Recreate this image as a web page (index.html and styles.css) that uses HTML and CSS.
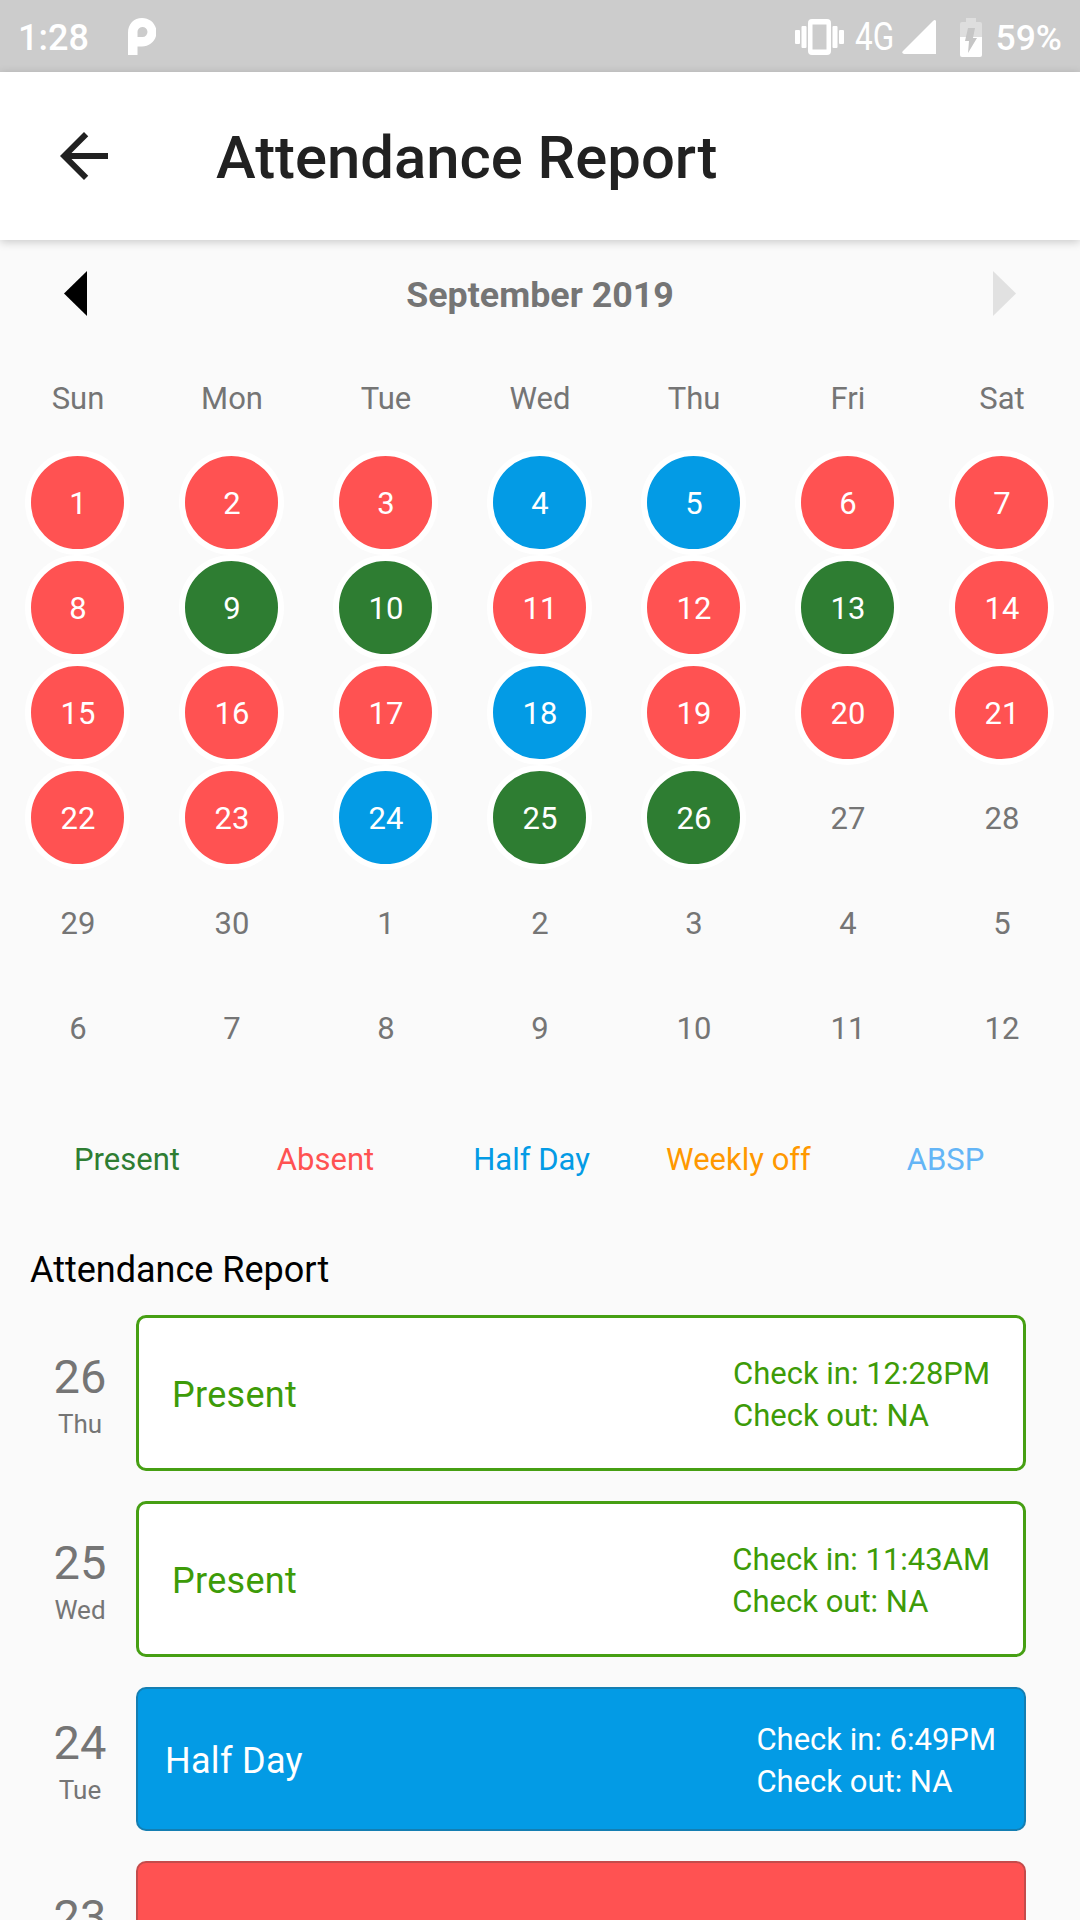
FILE: index.html
```html
<!DOCTYPE html>
<html lang="en">

<head>
  <meta charset="UTF-8">
  <meta name="viewport" content="width=device-width, initial-scale=1.0">
  <title>Attendance Report</title>
  <link rel="stylesheet" href="styles.css">
</head>

<body>
  <div class="status-bar">
    <span class="time">1:28</span>
    <svg class="logo" width="28" height="38" viewBox="0 0 28 38">
      <path fill="#fff" fill-rule="evenodd" d="M0 37V14.500C0 6 6 0 14 0s14.500 6 14.500 14.200S22 28.500 14 28.500H9.500V37zM9.500 19V14.500a5 5 0 1 1 5 4.500z" />
    </svg>
    <div class="status-icons">
      <svg class="vibrate" width="50" height="38" viewBox="0 0 50 38" fill="#fff">
        <rect x="0" y="12" width="5" height="14" rx="1" />
        <rect x="6.500" y="8" width="5" height="22" rx="1" />
        <path fill-rule="evenodd" d="M17 1h15a4 4 0 0 1 4 4v28a4 4 0 0 1-4 4H17a4 4 0 0 1-4-4V5a4 4 0 0 1 4-4zM17.500 6.500v25h14v-25z" />
        <rect x="37.500" y="8" width="5" height="22" rx="1" />
        <rect x="44" y="12" width="5" height="14" rx="1" />
      </svg>
      <span class="network">4G</span>
      <svg class="signal" width="34" height="34" viewBox="0 0 34 34">
        <path fill="#fff" d="M34 1v33H2q-3-1-1-3L31 1q2-2 3 0z" />
      </svg>
      <svg class="battery" width="22" height="39" viewBox="0 0 22 39">
        <path fill="#dedede" d="M6 0h10v4h4q2 0 2 2v13H0V6q0-2 2-2h4z" />
        <path fill="#fff" d="M0 19h22v18q0 2-2 2H2q-2 0-2-2z" />
        <path fill="#c6c6c6" d="M8 10h7l-2 10h4L8 35l1-12H5z" />
      </svg>
      <span class="percent">59%</span>
    </div>
  </div>

  <header>
    <svg class="back" width="72" height="72" viewBox="0 0 24 24">
      <path fill="#212121" d="M20 11H7.830l5.590-5.590L12 4l-8 8 8 8 1.410-1.410L7.830 13H20v-2z" />
    </svg>
    <h1>Attendance Report</h1>
  </header>

  <main>
    <div class="month">
      <svg width="23" height="45" viewBox="0 0 23 45"><path d="M23 0v45L0 22.500z" /></svg>
      <h2>September 2019</h2>
      <svg width="23" height="45" viewBox="0 0 23 45"><path fill="#e1e1e1" d="M0 0v45l23-22.500z" /></svg>
    </div>

    <div class="weekdays">
      <span>Sun</span><span>Mon</span><span>Tue</span><span>Wed</span><span>Thu</span><span>Fri</span><span>Sat</span>
    </div>

    <div class="days">
      <span class="day absent">1</span>
      <span class="day absent">2</span>
      <span class="day absent">3</span>
      <span class="day half">4</span>
      <span class="day half">5</span>
      <span class="day absent">6</span>
      <span class="day absent">7</span>

      <span class="day absent">8</span>
      <span class="day present">9</span>
      <span class="day present">10</span>
      <span class="day absent">11</span>
      <span class="day absent">12</span>
      <span class="day present">13</span>
      <span class="day absent">14</span>

      <span class="day absent">15</span>
      <span class="day absent">16</span>
      <span class="day absent">17</span>
      <span class="day half">18</span>
      <span class="day absent">19</span>
      <span class="day absent">20</span>
      <span class="day absent">21</span>

      <span class="day absent">22</span>
      <span class="day absent">23</span>
      <span class="day half">24</span>
      <span class="day present">25</span>
      <span class="day present">26</span>
      <span class="day">27</span>
      <span class="day">28</span>

      <span class="day">29</span>
      <span class="day">30</span>
      <span class="day">1</span>
      <span class="day">2</span>
      <span class="day">3</span>
      <span class="day">4</span>
      <span class="day">5</span>

      <span class="day">6</span>
      <span class="day">7</span>
      <span class="day">8</span>
      <span class="day">9</span>
      <span class="day">10</span>
      <span class="day">11</span>
      <span class="day">12</span>
    </div>

    <div class="legend">
      <span class="legend-present">Present</span>
      <span class="legend-absent">Absent</span>
      <span class="legend-half">Half Day</span>
      <span class="legend-weekly">Weekly off</span>
      <span class="legend-absp">ABSP</span>
    </div>

    <h3>Attendance Report</h3>

    <div class="report">
      <div class="report-item">
        <div class="date"><b>26</b><span>Thu</span></div>
        <div class="card card-present">
          <span class="card-status">Present</span>
          <p>Check in: 12:28PM<br>Check out: NA</p>
        </div>
      </div>

      <div class="report-item">
        <div class="date"><b>25</b><span>Wed</span></div>
        <div class="card card-present">
          <span class="card-status">Present</span>
          <p>Check in: 11:43AM<br>Check out: NA</p>
        </div>
      </div>

      <div class="report-item">
        <div class="date"><b>24</b><span>Tue</span></div>
        <div class="card card-half">
          <span class="card-status">Half Day</span>
          <p>Check in: 6:49PM<br>Check out: NA</p>
        </div>
      </div>

      <div class="report-item">
        <div class="date"><b>23</b></div>
        <div class="card card-absent"></div>
      </div>
    </div>
  </main>
</body>

</html>
```

FILE: styles.css
```css
* {
  box-sizing: border-box;
}

body {
  font-family: Roboto, sans-serif;
  margin: 0;
  height: 1920px;
  overflow: hidden;
  background-color: #fafafa;
  color: #757575;
  font-size: 31px;
}

h1,
h2,
h3,
p {
  margin: 0;
}

svg {
  display: block;
  flex-shrink: 0;
}

.status-bar {
  height: 72px;
  background-color: #cccccc;
  color: white;
  display: flex;
  align-items: center;
  padding: 2px 18px 0;
  font-size: 36px;
  font-weight: 500;
}

.time,
.percent {
  padding-top: 1px;
}

.percent {
  font-size: 35.5px;
}

.logo {
  margin-left: 39px;
}

.status-icons {
  display: flex;
  align-items: center;
  margin-left: auto;
}

.network {
  width: 40px;
  margin-left: 10px;
  font-size: 38px;
  font-weight: 400;
  transform: scaleX(0.83);
  transform-origin: left;
}

.signal {
  margin-left: 7px;
}

.battery {
  margin: 0 14px 0 24px;
}

header {
  position: relative;
  height: 168px;
  background-color: white;
  box-shadow: 0 2px 9px rgba(0, 0, 0, 0.2);
  display: flex;
  align-items: center;
  padding-left: 48px;
}

header h1 {
  margin-left: 96px;
  padding-top: 3px;
  font-size: 59.800px;
  font-weight: 500;
  color: #212121;
}

.month {
  display: flex;
  justify-content: space-between;
  align-items: center;
  height: 106px;
  padding: 0 64px;
}

.month h2 {
  font-size: 35.800px;
  font-weight: 700;
  padding-top: 3px;
}

.weekdays,
.days {
  display: grid;
  grid-template-columns: repeat(7, 154px);
  text-align: center;
}

.weekdays {
  height: 104px;
  line-height: 106px;
  padding-left: 1px;
}

.days {
  grid-auto-rows: 105px;
  justify-items: center;
}

.day {
  width: 105px;
  height: 105px;
  line-height: 95px;
  padding-left: 2px;
  border: 6px solid transparent;
  border-radius: 50%;
}

.day.present,
.day.absent,
.day.half {
  border-color: white;
  color: white;
}

.present {
  background-color: #2e7d32;
}

.absent {
  background-color: #ff5252;
}

.half {
  background-color: #039be5;
}

.legend {
  display: grid;
  grid-template-columns: repeat(5, 207px);
  height: 80px;
  line-height: 80px;
  margin-top: 40px;
  padding-left: 14px;
  text-align: center;
}

.legend-present {
  color: #2e7d32;
  padding-left: 19px;
}

.legend-absent {
  color: #ff5252;
  padding-left: 2px;
}

.legend-half {
  color: #039be5;
}

.legend-weekly {
  color: #ff9800;
}

.legend-absp {
  color: #64b5f6;
}

h3 {
  height: 115px;
  line-height: 140px;
  padding-left: 30px;
  font-size: 36px;
  font-weight: 400;
  color: black;
}

.report {
  padding: 0 54px 0 24px;
}

.report-item {
  display: flex;
  align-items: center;
  margin-bottom: 30px;
}

.date {
  width: 112px;
  height: 92px;
  text-align: center;
}

.date b {
  display: block;
  font-size: 47px;
  line-height: 60px;
  font-weight: 400;
}

.date span {
  display: block;
  font-size: 26px;
  line-height: 34px;
}

.card {
  flex: 1;
  height: 144px;
  display: flex;
  justify-content: space-between;
  align-items: center;
  padding: 3px 28px 0 27px;
  border: 2px solid rgba(60, 60, 60, 0.3);
  border-radius: 10px;
  color: white;
}

.card p {
  line-height: 42px;
}

.card-status {
  font-size: 36px;
  letter-spacing: 0.300px;
}

.card-present {
  height: 156px;
  padding: 3px 33px 0 33px;
  border: 3px solid #469f13;
  background-color: white;
  color: #3d9b08;
}

.card-half {
  background-color: #039be5;
}

.card-absent {
  background-color: #ff5252;
}
```
